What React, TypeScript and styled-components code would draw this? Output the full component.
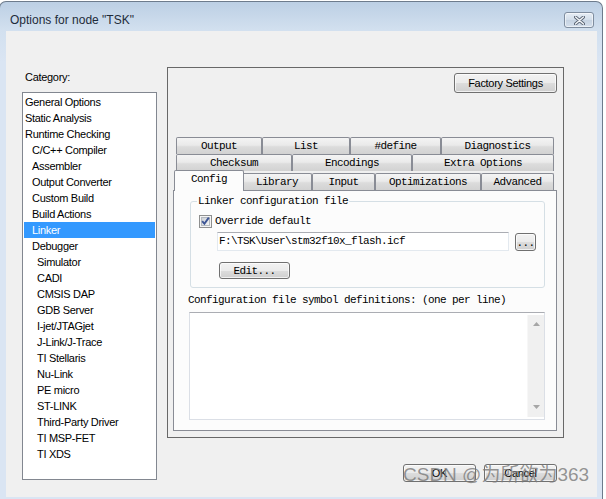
import React from "react"
import styled, { createGlobalStyle, css } from "styled-components"

const UI_FONT = `"Liberation Sans", Arial, sans-serif`
const MONO_FONT = `"Liberation Mono", "Courier New", monospace`

interface CategoryItem {
  label: string
  level: 0 | 1 | 2
  selected?: boolean
}

const categories: CategoryItem[] = [
  { label: "General Options", level: 0 },
  { label: "Static Analysis", level: 0 },
  { label: "Runtime Checking", level: 0 },
  { label: "C/C++ Compiler", level: 1 },
  { label: "Assembler", level: 1 },
  { label: "Output Converter", level: 1 },
  { label: "Custom Build", level: 1 },
  { label: "Build Actions", level: 1 },
  { label: "Linker", level: 1, selected: true },
  { label: "Debugger", level: 1 },
  { label: "Simulator", level: 2 },
  { label: "CADI", level: 2 },
  { label: "CMSIS DAP", level: 2 },
  { label: "GDB Server", level: 2 },
  { label: "I-jet/JTAGjet", level: 2 },
  { label: "J-Link/J-Trace", level: 2 },
  { label: "TI Stellaris", level: 2 },
  { label: "Nu-Link", level: 2 },
  { label: "PE micro", level: 2 },
  { label: "ST-LINK", level: 2 },
  { label: "Third-Party Driver", level: 2 },
  { label: "TI MSP-FET", level: 2 },
  { label: "TI XDS", level: 2 },
]

interface TabDef {
  label: string
  width: number
  active?: boolean
}

// back rows first, the row holding the active tab last
const tabRows: TabDef[][] = [
  [
    { label: "Output", width: 86 },
    { label: "List", width: 88 },
    { label: "#define", width: 91 },
    { label: "Diagnostics", width: 113 },
  ],
  [
    { label: "Checksum", width: 116 },
    { label: "Encodings", width: 120 },
    { label: "Extra Options", width: 142 },
  ],
  [
    { label: "Config", width: 66, active: true },
    { label: "Library", width: 70 },
    { label: "Input", width: 63 },
    { label: "Optimizations", width: 106 },
    { label: "Advanced", width: 73 },
  ],
]

const levelIndent = [1, 8, 13]

const CloseGlyph = () => (
  <svg width="11" height="9" viewBox="0 0 11 9">
    <path d="M1.5 1 L9.5 8 M9.5 1 L1.5 8" stroke="#5b6676" strokeWidth="3.2" strokeLinecap="round" />
    <path d="M1.5 1 L9.5 8 M9.5 1 L1.5 8" stroke="#f4f6f9" strokeWidth="1.4" strokeLinecap="round" />
  </svg>
)

const CheckGlyph = () => (
  <svg width="13" height="13" viewBox="0 0 13 13">
    <defs>
      <linearGradient id="cb" x1="0" y1="0" x2="1" y2="1">
        <stop offset="0" stopColor="#cbcfd5" />
        <stop offset="1" stopColor="#f6f6f6" />
      </linearGradient>
    </defs>
    <rect x="0.5" y="0.5" width="12" height="12" fill="#f4f4f4" stroke="#8e8f8f" />
    <rect x="2.5" y="2.5" width="8" height="8" fill="url(#cb)" stroke="#b4b9bf" />
    <path d="M3.2 6.2 L5.4 8.8 L9.8 2.6" stroke="#3d5595" strokeWidth="1.9" fill="none" />
  </svg>
)

const Arrow = ({ down }: { down?: boolean }) => (
  <svg width="7" height="4" viewBox="0 0 7 4">
    <path d={down ? "M0 0 H7 L3.5 4 Z" : "M0 4 H7 L3.5 0 Z"} fill="#a6a6a6" />
  </svg>
)

const App = () => {
  return (
    <>
      <GlobalStyle />
      <Window>
        <TitleBar>
          <Title>Options for node "TSK"</Title>
          <CloseButton>
            <CloseGlyph />
          </CloseButton>
        </TitleBar>

        <Client>
          <LeftColumn>
            <CategoryLabel>Category:</CategoryLabel>
            <ListBox>
              {categories.map((c) => (
                <ListItem key={c.label} $indent={levelIndent[c.level]} $selected={c.selected}>
                  {c.label}
                </ListItem>
              ))}
            </ListBox>
          </LeftColumn>

          <Panel>
            <FactoryButton>Factory Settings</FactoryButton>
            <TabControl>
              {tabRows.map((row, i) => (
                <TabRow key={i} $front={i === tabRows.length - 1}>
                  {row.map((t) => (
                    <Tab key={t.label} $w={t.width} $active={t.active}>
                      {t.label}
                    </Tab>
                  ))}
                </TabRow>
              ))}
              <TabPage>
                <GroupBox>
                  <Legend>Linker configuration file</Legend>
                  <CheckRow>
                    <CheckGlyph />
                    <MonoText>Override default</MonoText>
                  </CheckRow>
                  <PathRow>
                    <TextBox>F:\TSK\User\stm32f10x_flash.icf</TextBox>
                    <BrowseButton>...</BrowseButton>
                  </PathRow>
                  <EditButton>Edit...</EditButton>
                </GroupBox>
                <SymbolLabel>Configuration file symbol definitions: (one per line)</SymbolLabel>
                <SymbolBox>
                  <SymbolText />
                  <ScrollBar>
                    <Arrow />
                    <Arrow down />
                  </ScrollBar>
                </SymbolBox>
              </TabPage>
            </TabControl>
          </Panel>

          <ButtonRow>
            <DialogButton>OK</DialogButton>
            <DialogButton>Cancel</DialogButton>
          </ButtonRow>

          <Watermark>CSDN @为所欲为363</Watermark>
        </Client>
      </Window>
    </>
  )
}

export default App

const GlobalStyle = createGlobalStyle`
  html, body {
    margin: 0;
    padding: 0;
    background: #ffffff;
    overflow: hidden;
  }
  #root {
    width: 606px;
    height: 499px;
    overflow: hidden;
  }
`

const Window = styled.div`
  box-sizing: border-box;
  width: 604px;
  height: 498px;
  margin: 1px 0 0 -1px;
  border: 1px solid #6d7b8c;
  border-bottom: none;
  border-radius: 7px 7px 0 0;
  background: linear-gradient(#bccfe4 0px, #d2e0ef 28px, #dae5f3 60px, #dae5f3 100%);
  display: flex;
  flex-direction: column;
  overflow: hidden;
`

const TitleBar = styled.div`
  height: 29px;
  flex-shrink: 0;
  display: flex;
  align-items: flex-start;
  justify-content: space-between;
  padding: 10px 8px 0 10px;
  box-sizing: border-box;
`

const Title = styled.div`
  font: 12px ${UI_FONT};
  line-height: 16px;
  color: #1e2b3a;
`

const CloseButton = styled.div`
  box-sizing: border-box;
  width: 30px;
  height: 16px;
  border: 1px solid #7f8d9f;
  border-radius: 3px;
  background: linear-gradient(#e6edf5, #d3deea 50%, #c6d3e2 51%, #d4dfec);
  box-shadow: inset 0 0 0 1px rgba(255, 255, 255, 0.55);
  display: flex;
  align-items: center;
  justify-content: center;
`

const Client = styled.div`
  position: relative;
  flex: 1;
  margin: 0 5px 2px 6px;
  background: #f0f0f0;
  display: grid;
  grid-template-columns: 135px 397px;
  grid-template-rows: auto auto;
  column-gap: 10px;
  align-content: start;
  padding: 36px 0 0 16px;
`

const LeftColumn = styled.div`
  grid-row: 1 / span 2;
  display: flex;
  flex-direction: column;
`

const CategoryLabel = styled.div`
  margin-top: 3px;
  padding-left: 3px;
  font: 11px ${UI_FONT};
  letter-spacing: -0.3px;
  line-height: 14px;
  color: #000;
`

const ListBox = styled.div`
  box-sizing: border-box;
  margin-top: 8px;
  height: 388px;
  border: 1px solid #828790;
  background: #ffffff;
  padding: 1px;
`

const ListItem = styled.div<{ $indent: number; $selected?: boolean }>`
  height: 16px;
  line-height: 16px;
  padding-left: ${(p) => p.$indent}px;
  font: 11px ${UI_FONT};
  line-height: 16px;
  letter-spacing: -0.3px;
  color: #000;
  white-space: nowrap;

  ${(p) =>
    p.$selected &&
    css`
      background: #3399ff;
      color: #ffffff;
    `}
`

const buttonLook = css`
  box-sizing: border-box;
  border: 1px solid #707070;
  border-radius: 3px;
  background: linear-gradient(#f2f2f2 0%, #ebebeb 50%, #dddddd 51%, #cfcfcf 100%);
  box-shadow: inset 0 0 0 1px rgba(255, 255, 255, 0.7);
  display: flex;
  align-items: center;
  justify-content: center;
  color: #000;
  white-space: nowrap;
`

const Panel = styled.div`
  box-sizing: border-box;
  width: 397px;
  height: 371px;
  border: 1px solid #686868;
  padding: 5px 6px 6px 5px;
  display: flex;
  flex-direction: column;
`

const FactoryButton = styled.div`
  ${buttonLook}
  align-self: flex-end;
  width: 103px;
  height: 20px;
  font: 11px ${UI_FONT};
  letter-spacing: -0.3px;
`

const TabControl = styled.div`
  margin-top: 44px;
  display: flex;
  flex-direction: column;
`

const TabRow = styled.div<{ $front?: boolean }>`
  display: flex;
  padding: 0 3px;
  height: ${(p) => (p.$front ? 19 : 17)}px;
  align-items: flex-end;
`

const Tab = styled.div<{ $w: number; $active?: boolean }>`
  box-sizing: border-box;
  width: ${(p) => p.$w}px;
  height: 17px;
  flex-shrink: 0;
  border: 1px solid #898c95;
  border-bottom: none;
  border-radius: 2px 2px 0 0;
  background: linear-gradient(#f4f4f4 0%, #eaeaea 45%, #dcdcdc 55%, #d2d2d2 100%);
  display: flex;
  align-items: center;
  justify-content: center;
  font: 11px ${MONO_FONT};
  letter-spacing: -0.6px;
  color: #000;
  white-space: nowrap;

  ${(p) =>
    p.$active &&
    css`
      position: relative;
      z-index: 1;
      width: ${p.$w + 4}px;
      height: 21px;
      margin: 0 -2px -1px;
      background: #fcfcfc;
      align-items: flex-start;
      padding-top: 2px;
    `}
`

const TabPage = styled.div`
  box-sizing: border-box;
  height: 241px;
  border: 1px solid #898c95;
  background: #fcfcfc;
  padding: 0 0 0 14px;
  display: flex;
  flex-direction: column;
`

const GroupBox = styled.fieldset`
  box-sizing: border-box;
  margin: 3px 0 0 2px;
  width: 355px;
  min-width: 0;
  padding: 6px 8px 8px 6px;
  border: 1px solid #d5dfe5;
  border-radius: 3px;
`

const Legend = styled.legend`
  padding: 0 1px;
  font: 11px ${MONO_FONT};
  letter-spacing: -0.6px;
  line-height: 14px;
  color: #000;
`

const MonoText = styled.span`
  font: 11px ${MONO_FONT};
  letter-spacing: -0.6px;
  line-height: 14px;
  color: #000;
`

const CheckRow = styled.div`
  display: flex;
  align-items: center;
  gap: 3px;
  height: 14px;
  padding-left: 2px;
`

const PathRow = styled.div`
  display: flex;
  align-items: flex-start;
  gap: 6px;
  margin-top: 4px;
  padding-left: 20px;
`

const TextBox = styled.div`
  box-sizing: border-box;
  width: 292px;
  height: 19px;
  border: 1px solid #e3e9ef;
  border-top-color: #abadb3;
  background: #ffffff;
  padding-left: 1px;
  font: 11px ${MONO_FONT};
  letter-spacing: -0.6px;
  line-height: 17px;
  color: #000;
  white-space: nowrap;
`

const BrowseButton = styled.div`
  ${buttonLook}
  margin-top: 1px;
  width: 21px;
  height: 18px;
  font: 11px ${MONO_FONT};
  letter-spacing: -0.6px;
  padding-top: 2px;
`

const EditButton = styled.div`
  ${buttonLook}
  margin: 11px 0 0 22px;
  width: 71px;
  height: 17px;
  font: 11px ${MONO_FONT};
  letter-spacing: -0.6px;
`

const SymbolLabel = styled.div`
  margin-top: 6px;
  font: 11px ${MONO_FONT};
  letter-spacing: -0.6px;
  line-height: 12px;
  color: #000;
  white-space: nowrap;
`

const SymbolBox = styled.div`
  box-sizing: border-box;
  margin: 6px 0 0 1px;
  width: 356px;
  height: 108px;
  border: 1px solid #dbdfe6;
  border-top-color: #abadb3;
  background: #ffffff;
  display: flex;
`

const SymbolText = styled.div`
  flex: 1;
`

const ScrollBar = styled.div`
  width: 17px;
  margin: 2px 0;
  background: #f0f0f0;
  border-left: 1px solid #f7f7f7;
  display: flex;
  flex-direction: column;
  align-items: center;
  justify-content: space-between;
  padding: 7px 0 8px;
  box-sizing: border-box;
`

const ButtonRow = styled.div`
  grid-column: 2;
  display: flex;
  justify-content: flex-end;
  gap: 8px;
  margin-top: 26px;
  padding-right: 7px;
`

const DialogButton = styled.div`
  ${buttonLook}
  width: 73px;
  height: 18px;
  font: 11px ${UI_FONT};
  letter-spacing: -0.3px;
`

const Watermark = styled.div`
  position: absolute;
  left: 397px;
  top: 433px;
  font: 19px "Liberation Sans", "Noto Sans CJK SC", sans-serif;
  line-height: 22px;
  color: rgba(120, 120, 120, 0.78);
  white-space: nowrap;
  pointer-events: none;
`
